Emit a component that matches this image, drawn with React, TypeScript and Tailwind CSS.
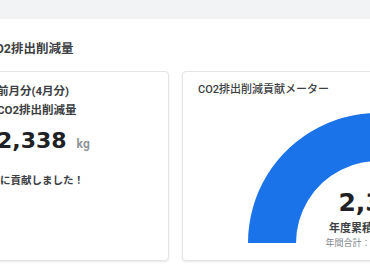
import React from 'react';

const GAUGE_RATIO = 0.7;

const Gauge = () => {
    // half donut, 130 outer / 82 inner radius, centre at the bottom of the box
    const cx = 131;
    const cy = 130;
    const R = 130;
    const r = 82;
    const a = Math.PI * (1 - GAUGE_RATIO);
    const ox = cx + R * Math.cos(a);
    const oy = cy - R * Math.sin(a);
    const ix = cx + r * Math.cos(a);
    const iy = cy - r * Math.sin(a);

    return (
        <svg width="262" height="130" viewBox="0 0 262 130" className="block">
            <path
                d={`M ${cx - R} ${cy} A ${R} ${R} 0 0 1 ${cx + R} ${cy} L ${cx + r} ${cy} A ${r} ${r} 0 0 0 ${cx - r} ${cy} Z`}
                fill="#e8eaed"
            />
            <path
                d={`M ${cx - R} ${cy} A ${R} ${R} 0 0 1 ${ox} ${oy} L ${ix} ${iy} A ${r} ${r} 0 0 0 ${cx - r} ${cy} Z`}
                fill="#1a73e8"
            />
        </svg>
    );
};

export default function App() {
    return (
        <div className="w-[370px] h-[270px] overflow-hidden bg-white font-['Roboto','Noto_Sans_CJK_JP',sans-serif]">
            {/* top strip */}
            <div className="h-[19px] bg-[#f1f3f4]"></div>

            <div className="ml-[-19px] w-[600px] flex flex-col">
                <h2 className="mt-[21px] ml-[6px] text-[12.5px] leading-[18px] font-bold text-[#3c4043]">
                    CO2排出削減量
                </h2>

                <div className="mt-[13px] flex gap-[13px]">
                    {/* Last month card */}
                    <div className="w-[188px] h-[190px] shrink-0 rounded-[4px] border border-[#e3e5e8] bg-white shadow-[0_1px_2px_rgba(60,64,67,0.12)] px-[15px] pt-[10px]">
                        <p className="text-[11.5px] leading-[19px] font-bold text-[#3c4043]">前月分(4月分)</p>
                        <p className="text-[11.5px] leading-[19px] font-bold text-[#3c4043]">CO2排出削減量</p>
                        <div className="mt-[8px] flex items-baseline gap-[10px]">
                            <span className="font-['DejaVu_Sans',sans-serif] text-[22px] leading-[26px] font-bold text-[#202124]">
                                2,338
                            </span>
                            <span className="text-[12px] font-bold text-[#8f959b]">kg</span>
                        </div>
                        <p className="mt-[20px] ml-[3px] text-[10.5px] leading-[14px] font-bold text-[#3c4043]">
                            に貢献しました！
                        </p>
                    </div>

                    {/* Meter card */}
                    <div className="w-[392px] h-[190px] shrink-0 rounded-[4px] border border-[#e3e5e8] bg-white shadow-[0_1px_2px_rgba(60,64,67,0.12)] px-[15px] pt-[10px]">
                        <p className="text-[11px] leading-[16px] font-medium text-[#3c4043]">CO2排出削減貢献メーター</p>
                        <div className="mt-[15px] flex justify-center">
                            <div className="relative">
                                <Gauge />
                                <div className="absolute inset-x-0 bottom-[-7px] flex flex-col items-center">
                                    <span className="font-['DejaVu_Sans',sans-serif] text-[25px] leading-[28px] font-bold text-[#202124]">
                                        2,338
                                    </span>
                                    <span className="mt-[4px] text-[11px] leading-[15px] font-bold text-[#3c4043]">
                                        年度累積CO2削減量
                                    </span>
                                    <span className="text-[9px] leading-[14px] text-[#80868b]">
                                        年間合計：2,338 kg / 目標
                                    </span>
                                </div>
                            </div>
                        </div>
                    </div>
                </div>
            </div>
        </div>
    );
}
